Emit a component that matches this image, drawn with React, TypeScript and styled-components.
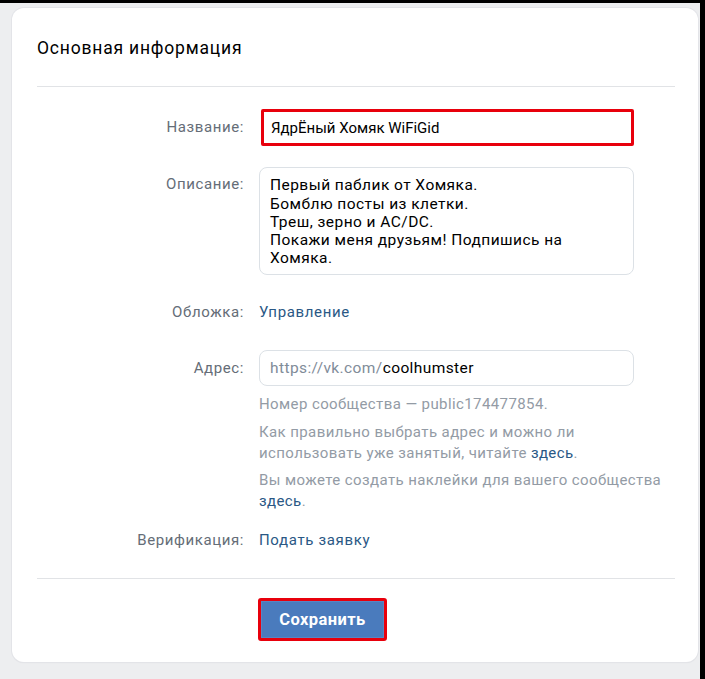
import React from "react";
import styled, { createGlobalStyle } from "styled-components";

const Global = createGlobalStyle`
  html, body { margin: 0; padding: 0; background: #000; }
  body { font-family: Roboto, "Noto Sans", Arial, sans-serif; }
  * { box-sizing: border-box; }
`;

const Page = styled.div`
  margin-top: 3px;
  margin-right: 5px;
  background: #edeef0;
  height: 676px;
  padding: 5px 2px 0 12px;
`;

const Card = styled.div`
  background: #fff;
  border-radius: 12px;
  box-shadow: 0 0 0 1px #e3e4e8, 0 1px 1px #dcdde1;
  height: 654px;
  padding: 0 23px 0 25px;
  display: flex;
  flex-direction: column;
`;

const Header = styled.div`
  height: 79px;
  display: flex;
  align-items: center;
  padding-top: 2px;
  font-size: 17.5px;
  letter-spacing: 0.8px;
  color: #000;
  border-bottom: 1px solid #e1e3e6;
`;

const Form = styled.div`
  display: grid;
  grid-template-columns: 207px 375px;
  column-gap: 15px;
  padding-top: 22px;
  align-items: start;
`;

const Label = styled.div<{ $top: number; $mt?: number }>`
  text-align: right;
  color: #656d77;
  font-size: 15px;
  letter-spacing: 0.6px;
  line-height: 20px;
  padding-top: ${(p) => p.$top}px;
  margin-top: ${(p) => p.$mt ?? 0}px;
`;

const Field = styled.div<{ $mt?: number }>`
  margin-top: ${(p) => p.$mt ?? 0}px;
  display: flex;
  flex-direction: column;
`;

const NameInput = styled.div`
  height: 37px;
  margin-left: 2px;
  border: 3px solid #e8000c;
  border-radius: 2px;
  padding: 0 0 0 7px;
  display: flex;
  align-items: center;
  font-size: 15px;
  color: #000;
`;

const TextArea = styled.div`
  height: 108px;
  border: 1px solid #dce1e6;
  border-radius: 8px;
  padding: 2px 10px 0 10px;
  font-size: 15.5px;
  letter-spacing: 0.45px;
  line-height: 18.2px;
  color: #000;
  white-space: pre-line;
  display: flex;
  align-items: center;
`;

const LinkText = styled.span`
  color: #2a5885;
  font-size: 15px;
  letter-spacing: 0.65px;
  line-height: 20px;
`;

const LinkLine = styled.div`
  line-height: 20px;
  height: 20px;
  display: flex;
  align-items: center;
`;

const AddressInput = styled.div`
  height: 36px;
  border: 1px solid #dce1e6;
  border-radius: 8px;
  padding: 0 10px;
  display: flex;
  align-items: center;
  font-size: 15.5px;
  letter-spacing: 0.4px;
  color: #000;
`;

const Prefix = styled.span`
  color: #818c99;
`;

const Hint = styled.div<{ $mt: number }>`
  color: #939ba5;
  font-size: 15px;
  letter-spacing: 0.4px;
  line-height: 21px;
  white-space: nowrap;
  margin-top: ${(p) => p.$mt}px;
`;

const HintLink = styled.span`
  color: #2a5885;
`;

const Footer = styled.div`
  margin-top: 28px;
  border-top: 1px solid #e1e3e6;
  padding: 19px 0 0 221px;
`;

const SaveButton = styled.button`
  width: 129px;
  height: 43px;
  border: 3px solid #e8000c;
  border-radius: 3px;
  background: #4a7bbd;
  box-shadow: inset 0 0 0 1px #5b85c2;
  color: #fff;
  font-family: Roboto, "Noto Sans", Arial, sans-serif;
  font-weight: 700;
  font-size: 16.5px;
  letter-spacing: 0.4px;
  padding: 0 0 1px;
  cursor: pointer;
`;

export default function App() {
  return (
    <>
      <Global />
      <Page>
        <Card>
          <Header>Основная информация</Header>
          <Form>
            <Label $top={8}>Название:</Label>
            <Field>
              <NameInput>ЯдрЁный Хомяк WiFiGid</NameInput>
            </Field>

            <Label $top={7} $mt={21}>Описание:</Label>
            <Field $mt={21}>
              <TextArea>
                {"Первый паблик от Хомяка.\nБомблю посты из клетки.\nТреш, зерно и AC/DC.\nПокажи меня друзьям! Подпишись на\nХомяка."}
              </TextArea>
            </Field>

            <Label $top={0} $mt={27}>Обложка:</Label>
            <Field $mt={27}>
              <LinkLine>
                <LinkText>Управление</LinkText>
              </LinkLine>
            </Field>

            <Label $top={8} $mt={28}>Адрес:</Label>
            <Field $mt={28}>
              <AddressInput>
                <Prefix>https://vk.com/</Prefix>coolhumster
              </AddressInput>
              <Hint $mt={8}>Номер сообщества — public174477854.</Hint>
              <Hint $mt={7}>
                Как правильно выбрать адрес и можно ли
                <br />
                использовать уже занятый, читайте <HintLink>здесь</HintLink>.
              </Hint>
              <Hint $mt={6}>
                Вы можете создать наклейки для вашего сообщества
                <br />
                <HintLink>здесь</HintLink>.
              </Hint>
            </Field>

            <Label $top={0} $mt={18}>Верификация:</Label>
            <Field $mt={18}>
              <LinkLine>
                <LinkText>Подать заявку</LinkText>
              </LinkLine>
            </Field>
          </Form>
          <Footer>
            <SaveButton>Сохранить</SaveButton>
          </Footer>
        </Card>
      </Page>
    </>
  );
}
